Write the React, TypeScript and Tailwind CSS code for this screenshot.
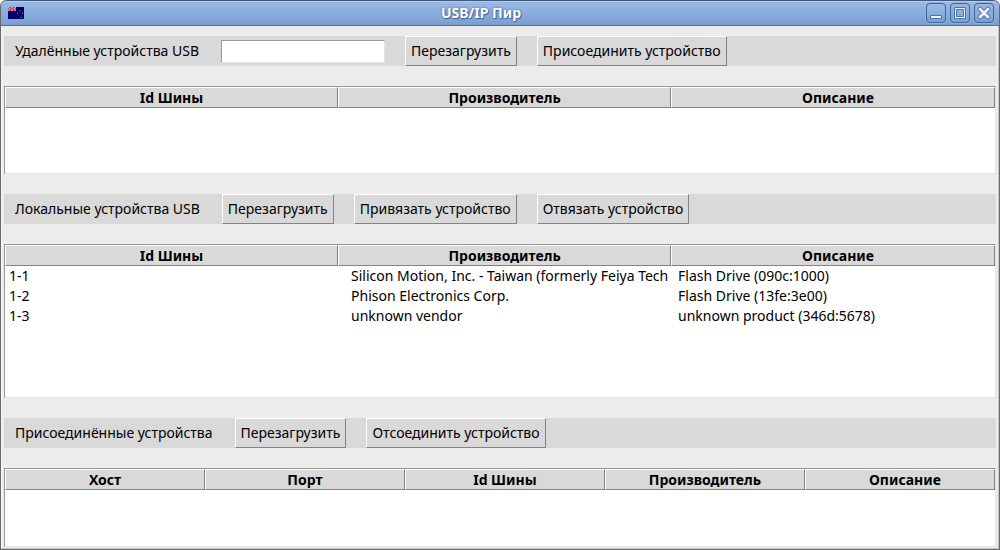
import React from 'react'

type Column = {
  title: string
  width: string
}

type DeviceTableProps = {
  label: string
  columns: Column[]
  rows?: string[][]
  height: string
}

const deviceColumns: Column[] = [
  { title: 'Id Шины', width: 'w-[33.64%]' },
  { title: 'Производитель', width: 'w-[33.64%]' },
  { title: 'Описание', width: '' },
]

const attachedColumns: Column[] = [
  { title: 'Хост', width: 'w-[20.2%]' },
  { title: 'Порт', width: 'w-[20.2%]' },
  { title: 'Id Шины', width: 'w-[20.2%]' },
  { title: 'Производитель', width: 'w-[20.2%]' },
  { title: 'Описание', width: '' },
]

const localDevices = [
  ['1-1', 'Silicon Motion, Inc. - Taiwan (formerly Feiya Techn', 'Flash Drive (090c:1000)'],
  ['1-2', 'Phison Electronics Corp.', 'Flash Drive (13fe:3e00)'],
  ['1-3', 'unknown vendor', 'unknown product (346d:5678)'],
]

const cellPadding = ['pl-1', 'pl-[13px] pr-[3px]', 'pl-[7px]']

function Flag() {
  return (
    <svg width="16" height="12" viewBox="0 0 16 12" shapeRendering="crispEdges" aria-hidden="true">
      <path fill="#00006b" d="M0 0h16v12H0z" />
      <path fill="#d9587a" d="M0 0h8v4H0z" />
      <path fill="#f08f9c" d="M0 0h1v1H0zM3 0h2v1H3zM7 0h1v1H7zM1 1h1v1H1zM6 1h1v1H6zM0 3h1v1H0zM3 3h2v1H3zM7 3h1v1H7z" />
      <path fill="#7b3a78" d="M2 0h1v1H2zM5 0h1v1H5zM2 3h1v1H2zM5 3h1v1H5z" />
      <path fill="#e8555f" d="M3 1h2v2H3z" />
      <path fill="#8c2a62" d="M12 3h1v1h-1zM11 4h1v1h-1zM14 5h1v1h-1zM12 10h1v1h-1z" />
      <path fill="#b0547c" d="M9 6h1v1H9zM13 10h1v1h-1zM14 6h1v1h-1z" />
    </svg>
  )
}

function WindowButton({ label, children }: { label: string; children: React.ReactNode }) {
  return (
    <button
      type="button"
      aria-label={label}
      className="h-5 w-5 rounded-[4px] border border-[#3c679c] bg-linear-to-b from-[#9ab9e3] to-[#7ba2d3] shadow-[0_0_0_1px_#8fb1dc]"
    >
      <svg width="18" height="18" viewBox="0 0 18 18" fill="none" aria-hidden="true">
        {children}
      </svg>
    </button>
  )
}

function TitleBar() {
  return (
    <header className="flex h-[26px] items-center rounded-t-md border-t border-b border-t-[#40587c] border-b-[#4a73a8] bg-linear-to-b from-[#9cbbe6] to-[#7a9fd0] pr-[5px] pl-[7px] shadow-[inset_0_1px_0_#b4cdef]">
      <Flag />
      <h1 className="flex-1 pl-3 text-center text-sm leading-5 font-bold text-white [text-shadow:0_0_2px_#3c6496,1px_1px_1px_#3c6496]">
        USB/IP Пир
      </h1>
      <div className="flex gap-1">
        <WindowButton label="Свернуть">
          <path d="M3.5 11.5h11v3h-11z" fill="#edf3fb" stroke="#4a73a8" />
        </WindowButton>
        <WindowButton label="Развернуть">
          <path d="M3.5 3.5h11v11h-11z" stroke="#4a73a8" />
          <path d="M4.5 4.5h9v9h-9z" stroke="#edf3fb" />
          <path d="M5.5 5.5h7v7h-7z" stroke="#4a73a8" />
        </WindowButton>
        <WindowButton label="Закрыть">
          <path d="M5 5l8 8M13 5l-8 8" stroke="#4a73a8" strokeWidth="4.6" strokeLinecap="round" />
          <path d="M5 5l8 8M13 5l-8 8" stroke="#edf3fb" strokeWidth="2.8" strokeLinecap="round" />
        </WindowButton>
      </div>
    </header>
  )
}

function Button({ children }: { children: React.ReactNode }) {
  return (
    <button
      type="button"
      className="h-full border border-t-white border-r-[#828282] border-b-[#828282] border-l-white bg-[#d9d9d9] px-[5px] whitespace-nowrap"
    >
      {children}
    </button>
  )
}

function Toolbar({ children }: { children: React.ReactNode }) {
  return <div className="flex h-[30px] items-center gap-5 bg-[#d9d9d9] pl-[11px]">{children}</div>
}

function DeviceTable({ label, columns, rows = [], height }: DeviceTableProps) {
  return (
    <div
      className={`${height} my-5 overflow-hidden border border-t-[#979797] border-r-[#e4e4e3] border-b-[#e4e4e3] border-l-[#979797] bg-white`}
    >
      <table aria-label={label} className="w-full table-fixed border-separate border-spacing-0">
        <thead>
          <tr className="h-[21px]">
            {columns.map((column) => (
              <th
                key={column.title}
                className={`${column.width} border border-t-white border-r-[#828282] border-b-[#828282] border-l-white bg-[#d9d9d9] p-0 leading-[19px] font-bold last:pl-[10px]`}
              >
                {column.title}
              </th>
            ))}
          </tr>
        </thead>
        <tbody>
          {rows.map((row) => (
            <tr key={row[0]} className="h-5">
              {row.map((cell, i) => (
                <td key={cell} className={`${cellPadding[i]} py-0`}>
                  <div className="overflow-hidden whitespace-nowrap">{cell}</div>
                </td>
              ))}
            </tr>
          ))}
        </tbody>
      </table>
    </div>
  )
}

export default function App() {
  return (
    <div className="min-h-screen bg-white font-['Noto_Sans',sans-serif] text-sm leading-5 text-black">
      <div className="flex min-h-screen flex-col rounded-t-md border-r border-b border-l border-[#6b6868] bg-[#edecea]">
        <TitleBar />
        <main className="flex-1 border-r border-b border-l border-r-[#c9c7c4] border-b-[#c9c7c4] border-l-[#f8f8f7] px-[2px] pt-[10px]">
          <section>
            <Toolbar>
              <label htmlFor="host" className="pr-0.5">
                Удалённые устройства USB
              </label>
              <input
                id="host"
                type="text"
                className="h-[23px] w-41 border border-t-[#979797] border-r-[#e4e4e3] border-b-[#e4e4e3] border-l-[#979797] bg-white px-1"
              />
              <Button>Перезагрузить</Button>
              <Button>Присоединить устройство</Button>
            </Toolbar>
            <DeviceTable label="Удалённые устройства USB" columns={deviceColumns} height="h-[88px]" />
          </section>
          <section>
            <Toolbar>
              <h2 className="pr-0.5">Локальные устройства USB</h2>
              <Button>Перезагрузить</Button>
              <Button>Привязать устройство</Button>
              <Button>Отвязать устройство</Button>
            </Toolbar>
            <DeviceTable
              label="Локальные устройства USB"
              columns={deviceColumns}
              rows={localDevices}
              height="h-[154px]"
            />
          </section>
          <section className="-mb-5">
            <Toolbar>
              <h2 className="pr-0.5">Присоединённые устройства</h2>
              <Button>Перезагрузить</Button>
              <Button>Отсоединить устройство</Button>
            </Toolbar>
            <DeviceTable label="Присоединённые устройства" columns={attachedColumns} height="h-[79px]" />
          </section>
        </main>
      </div>
    </div>
  )
}
